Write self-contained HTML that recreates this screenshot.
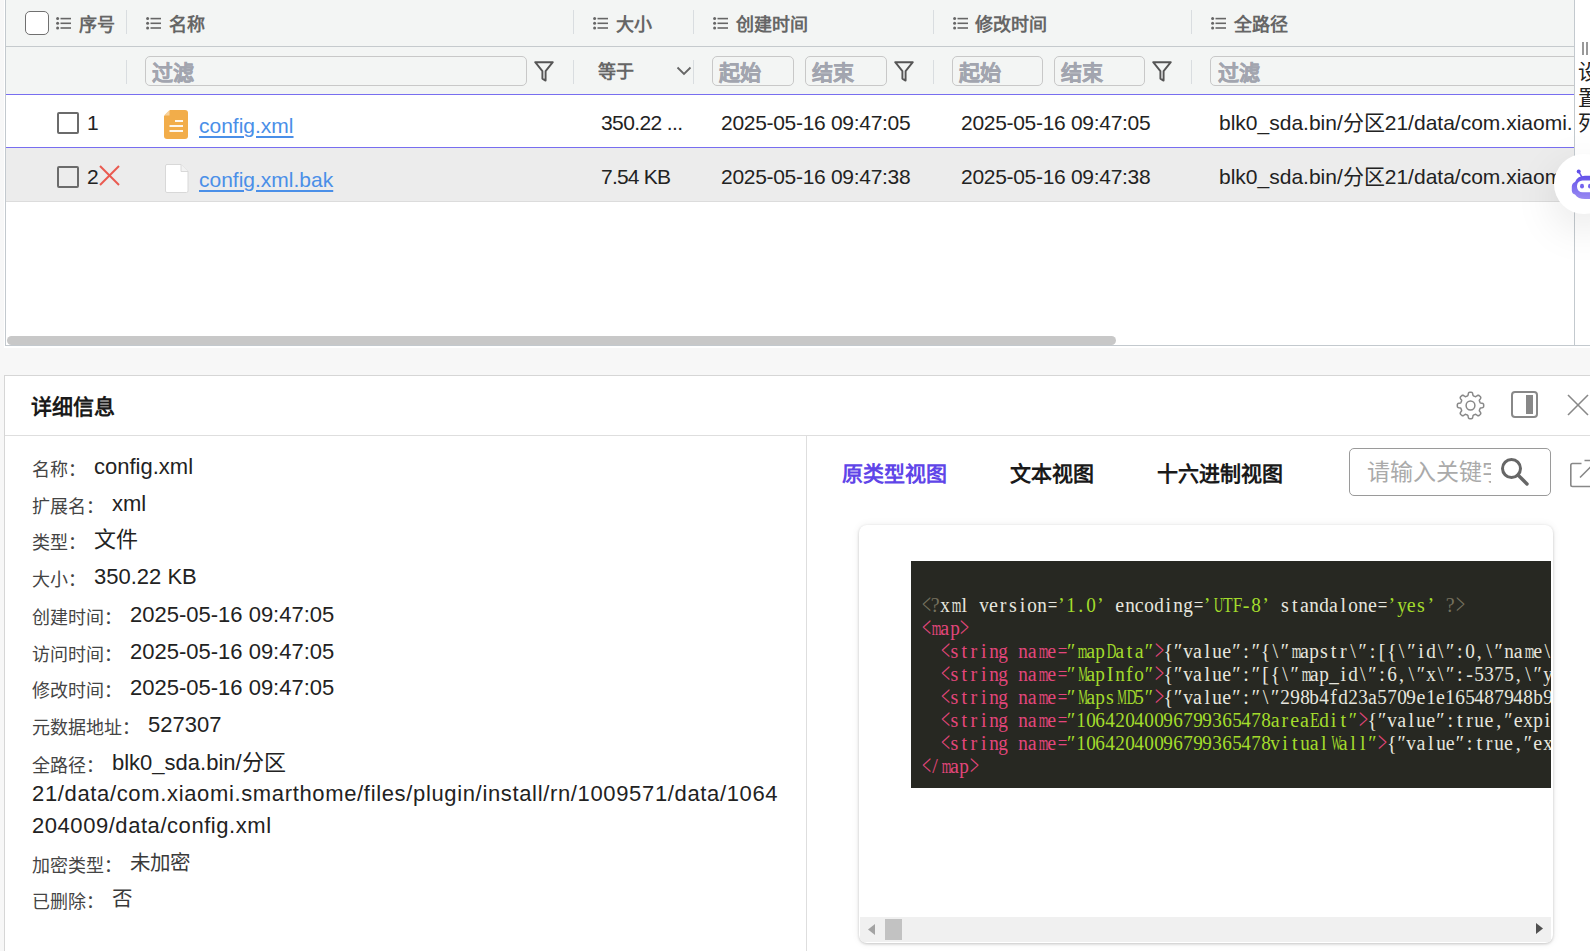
<!DOCTYPE html>
<html lang="zh-CN">
<head>
<meta charset="utf-8">
<style>
*{box-sizing:border-box;margin:0;padding:0}
html,body{width:1590px;height:951px;overflow:hidden;background:#f7f7f7;font-family:"Liberation Sans",sans-serif;color:#222}
.a{position:absolute}
#tblbg{left:5px;top:0;width:1570px;height:346px;background:#fff;border-left:1px solid #c3c9ce;border-right:1px solid #c3c9ce;border-bottom:1px solid #c3c9ce}
#tclip{left:0;top:0;width:1574px;height:345px;overflow:hidden}
.sep{width:1px;background:#d9dde0}
.ht{top:14px;font-size:18px;font-weight:bold;color:#666;line-height:22px;white-space:nowrap}
.inp{top:56px;height:30px;border:1px solid #c8c8c8;border-radius:5px;background:#f3f5f4}
.ph{top:61px;font-size:21px;font-weight:bold;color:#a2a5af;-webkit-text-stroke:0.4px #a2a5af;line-height:24px;white-space:nowrap}
.pline{width:1568px;height:1px;background:#786ef0}
.cb{border:2px solid #6b6b6b;background:#fff}
.cell{font-size:21px;line-height:24px;color:#222;white-space:nowrap;letter-spacing:-0.3px}
.lnk{font-size:21px;line-height:24px;color:#4a8fe8;text-decoration:underline;text-decoration-thickness:2px;text-underline-offset:3px;white-space:nowrap}
#det{left:4px;top:375px;width:1600px;height:600px;background:#fff;border-left:1px solid #d6d6d6;border-top:1px solid #d6d6d6}
.lab{left:32px;font-size:18px;color:#444;line-height:24px;white-space:nowrap}
.val{font-size:22px;color:#222;margin-left:8px}
.tab{top:461px;font-size:21px;font-weight:bold;line-height:26px;white-space:nowrap}
#card{position:absolute;left:859px;top:525px;width:694px;height:418px;background:#fff;border-radius:8px;box-shadow:0 1px 3px rgba(0,0,0,.2),0 0 8px rgba(0,0,0,.07);overflow:hidden}
#code{position:absolute;left:52px;top:36px;width:640px;height:227px;background:#272822;overflow:hidden}
#code pre{position:absolute;left:11px;top:12px;font-family:"Liberation Mono",monospace;font-size:17.4px;letter-spacing:-0.71px;line-height:23px;color:#e6e6df;white-space:pre}
.t{color:#e3467b}.s{color:#a3dc2c}.g{color:#75715e}
.cj{font-size:20.5px;color:#3a3a3a}
#cbox{left:9.5px;top:33px;width:700px;height:190px}
.cl{position:absolute;left:0;height:23px;white-space:nowrap;font-family:"Liberation Serif",serif;font-size:20px;line-height:23px;color:#e6e6df}
.cl i{font-style:normal;display:inline-block;width:9.73px;text-align:center;overflow:visible}
.lab{margin-top:1px}
.lab .val{position:relative;top:-2px}

</style>
</head>
<body>
<div class="a" style="left:4px;top:0;width:1586px;height:348px;background:#fff"></div>
<div class="a" id="tblbg"></div>
<div class="a" id="tclip">
<div class="a" style="left:6px;top:0;width:1568px;height:94px;background:#f3f5f4"></div>
<div class="a" style="left:6px;top:46px;width:1568px;height:1px;background:#c5cacd"></div>
<div class="a cb" style="left:25px;top:11px;width:24px;height:24px;border-radius:5px;border-width:1.6px;border-color:#707070"></div>
<svg class="a" style="left:56px;top:17px" width="16" height="13" viewBox="0 0 16 13"><g fill="#666"><circle cx="1.6" cy="1.6" r="1.5"/><circle cx="1.6" cy="6.3" r="1.5"/><circle cx="1.6" cy="11" r="1.5"/></g><g stroke="#666" stroke-width="1.6"><line x1="4.5" y1="1.6" x2="15" y2="1.6"/><line x1="4.5" y1="6.3" x2="15" y2="6.3"/><line x1="4.5" y1="11" x2="15" y2="11"/></g></svg>
<div class="a ht" style="left:79px">序号</div>
<div class="a sep" style="left:126px;top:10px;height:24px"></div>
<div class="a sep" style="left:126px;top:60px;height:24px"></div>
<svg class="a" style="left:146px;top:17px" width="16" height="13" viewBox="0 0 16 13"><g fill="#666"><circle cx="1.6" cy="1.6" r="1.5"/><circle cx="1.6" cy="6.3" r="1.5"/><circle cx="1.6" cy="11" r="1.5"/></g><g stroke="#666" stroke-width="1.6"><line x1="4.5" y1="1.6" x2="15" y2="1.6"/><line x1="4.5" y1="6.3" x2="15" y2="6.3"/><line x1="4.5" y1="11" x2="15" y2="11"/></g></svg>
<div class="a ht" style="left:169px">名称</div>
<div class="a sep" style="left:573px;top:10px;height:24px"></div>
<div class="a sep" style="left:573px;top:60px;height:24px"></div>
<svg class="a" style="left:593px;top:17px" width="16" height="13" viewBox="0 0 16 13"><g fill="#666"><circle cx="1.6" cy="1.6" r="1.5"/><circle cx="1.6" cy="6.3" r="1.5"/><circle cx="1.6" cy="11" r="1.5"/></g><g stroke="#666" stroke-width="1.6"><line x1="4.5" y1="1.6" x2="15" y2="1.6"/><line x1="4.5" y1="6.3" x2="15" y2="6.3"/><line x1="4.5" y1="11" x2="15" y2="11"/></g></svg>
<div class="a ht" style="left:616px">大小</div>
<div class="a sep" style="left:693px;top:10px;height:24px"></div>
<div class="a sep" style="left:693px;top:60px;height:24px"></div>
<svg class="a" style="left:713px;top:17px" width="16" height="13" viewBox="0 0 16 13"><g fill="#666"><circle cx="1.6" cy="1.6" r="1.5"/><circle cx="1.6" cy="6.3" r="1.5"/><circle cx="1.6" cy="11" r="1.5"/></g><g stroke="#666" stroke-width="1.6"><line x1="4.5" y1="1.6" x2="15" y2="1.6"/><line x1="4.5" y1="6.3" x2="15" y2="6.3"/><line x1="4.5" y1="11" x2="15" y2="11"/></g></svg>
<div class="a ht" style="left:736px">创建时间</div>
<div class="a sep" style="left:933px;top:10px;height:24px"></div>
<div class="a sep" style="left:933px;top:60px;height:24px"></div>
<svg class="a" style="left:953px;top:17px" width="16" height="13" viewBox="0 0 16 13"><g fill="#666"><circle cx="1.6" cy="1.6" r="1.5"/><circle cx="1.6" cy="6.3" r="1.5"/><circle cx="1.6" cy="11" r="1.5"/></g><g stroke="#666" stroke-width="1.6"><line x1="4.5" y1="1.6" x2="15" y2="1.6"/><line x1="4.5" y1="6.3" x2="15" y2="6.3"/><line x1="4.5" y1="11" x2="15" y2="11"/></g></svg>
<div class="a ht" style="left:975px">修改时间</div>
<div class="a sep" style="left:1191px;top:10px;height:24px"></div>
<div class="a sep" style="left:1191px;top:60px;height:24px"></div>
<svg class="a" style="left:1211px;top:17px" width="16" height="13" viewBox="0 0 16 13"><g fill="#666"><circle cx="1.6" cy="1.6" r="1.5"/><circle cx="1.6" cy="6.3" r="1.5"/><circle cx="1.6" cy="11" r="1.5"/></g><g stroke="#666" stroke-width="1.6"><line x1="4.5" y1="1.6" x2="15" y2="1.6"/><line x1="4.5" y1="6.3" x2="15" y2="6.3"/><line x1="4.5" y1="11" x2="15" y2="11"/></g></svg>
<div class="a ht" style="left:1234px">全路径</div>
<div class="a inp" style="left:145px;width:382px"></div>
<div class="a ph" style="left:152px">过滤</div>
<svg class="a" style="left:534px;top:61px" width="20" height="21" viewBox="0 0 20 21"><path d="M1.2 1.2 H18.8 L11.6 10.2 V19.6 L8.4 17.6 V10.2 Z" fill="none" stroke="#555" stroke-width="1.9" stroke-linejoin="round"/></svg>
<div class="a" style="left:598px;top:60px;font-size:18px;font-weight:bold;color:#666;line-height:24px">等于</div>
<svg class="a" style="left:676px;top:66px" width="16" height="10" viewBox="0 0 16 10"><path d="M1.5 1.5 L8 8 L14.5 1.5" fill="none" stroke="#666" stroke-width="1.8"/></svg>
<div class="a inp" style="left:712px;width:82px"></div>
<div class="a ph" style="left:719px">起始</div>
<div class="a inp" style="left:805px;width:82px"></div>
<div class="a ph" style="left:812px">结束</div>
<svg class="a" style="left:894px;top:61px" width="20" height="21" viewBox="0 0 20 21"><path d="M1.2 1.2 H18.8 L11.6 10.2 V19.6 L8.4 17.6 V10.2 Z" fill="none" stroke="#555" stroke-width="1.9" stroke-linejoin="round"/></svg>
<div class="a inp" style="left:952px;width:91px"></div>
<div class="a ph" style="left:959px">起始</div>
<div class="a inp" style="left:1054px;width:91px"></div>
<div class="a ph" style="left:1061px">结束</div>
<svg class="a" style="left:1152px;top:61px" width="20" height="21" viewBox="0 0 20 21"><path d="M1.2 1.2 H18.8 L11.6 10.2 V19.6 L8.4 17.6 V10.2 Z" fill="none" stroke="#555" stroke-width="1.9" stroke-linejoin="round"/></svg>
<div class="a inp" style="left:1210px;width:390px"></div>
<div class="a ph" style="left:1218px">过滤</div>
<div class="a pline" style="left:6px;top:94px"></div>
<div class="a cb" style="left:57px;top:112px;width:22px;height:22px;border-radius:2px"></div>
<div class="a cell" style="left:87px;top:111px">1</div>
<svg class="a" style="left:164px;top:110px" width="24" height="29" viewBox="0 0 24 29"><path d="M6 0 H21 Q24 0 24 3 V26 Q24 29 21 29 H3 Q0 29 0 26 V6 Z" fill="#f2ad4a"/><path d="M0 5.5 L5.5 0 V5.5 Z" fill="#f7d29b"/><g stroke="#fff" stroke-width="1.8"><line x1="11" y1="11" x2="19" y2="11"/><line x1="5.5" y1="16" x2="19" y2="16"/><line x1="5.5" y1="21" x2="19" y2="21"/></g></svg>
<div class="a lnk" style="left:199px;top:114px">config.xml</div>
<div class="a cell" style="left:601px;top:111px;letter-spacing:-0.6px">350.22 ...</div>
<div class="a cell" style="left:721px;top:111px">2025-05-16 09:47:05</div>
<div class="a cell" style="left:961px;top:111px">2025-05-16 09:47:05</div>
<div class="a cell" style="left:1219px;top:111px;letter-spacing:0px">blk0_sda.bin/分区21/data/com.xiaomi.</div>
<div class="a pline" style="left:6px;top:147px"></div>
<div class="a" style="left:6px;top:148px;width:1568px;height:53px;background:#ececec"></div>
<div class="a" style="left:6px;top:201px;width:1568px;height:1px;background:#dcdcdc"></div>
<div class="a cb" style="left:57px;top:166px;width:22px;height:22px;border-radius:2px;background:transparent"></div>
<div class="a cell" style="left:87px;top:165px">2</div>
<svg class="a" style="left:99px;top:165px" width="21" height="21" viewBox="0 0 21 21"><g stroke="#ea5a50" stroke-width="2"><line x1="1" y1="1" x2="20" y2="20"/><line x1="20" y1="1" x2="1" y2="20"/></g></svg>
<svg class="a" style="left:165px;top:164px" width="24" height="29" viewBox="0 0 24 29"><path d="M1.5 0.5 H16 L23 7.5 V27 Q23 28.5 21.5 28.5 H2 Q0.5 28.5 0.5 27 V2 Q0.5 0.5 2 0.5 Z" fill="#fff" stroke="#d8d8d8" stroke-width="1"/><path d="M16 0.5 V7.5 H23" fill="#f2f2f2" stroke="#d8d8d8" stroke-width="1"/></svg>
<div class="a lnk" style="left:199px;top:168px">config.xml.bak</div>
<div class="a cell" style="left:601px;top:165px;letter-spacing:-0.8px">7.54 KB</div>
<div class="a cell" style="left:721px;top:165px">2025-05-16 09:47:38</div>
<div class="a cell" style="left:961px;top:165px">2025-05-16 09:47:38</div>
<div class="a cell" style="left:1219px;top:165px;letter-spacing:0px">blk0_sda.bin/分区21/data/com.xiaomi.</div>
<div class="a" style="left:7px;top:336px;width:1109px;height:9px;background:#c8c8c8;border-radius:5px"></div>
</div>
<div class="a" style="left:1575px;top:345px;width:15px;height:1px;background:#c3c9ce"></div>
<div class="a" style="left:1582px;top:42px;width:2px;height:13px;background:#999"></div>
<div class="a" style="left:1586px;top:42px;width:2px;height:13px;background:#999"></div>
<div class="a" style="left:1578px;top:59px;width:24px;font-size:21px;line-height:25.5px;color:#222">设置列</div>
<div class="a" style="left:1554px;top:154px;width:60px;height:60px;border-radius:50%;background:#fff;box-shadow:0 14px 44px rgba(0,0,0,.10)"></div>
<svg class="a" style="left:1568px;top:166px" width="22" height="36" viewBox="0 0 22 36"><defs><linearGradient id="rg" x1="0" y1="0" x2="0" y2="1"><stop offset="0" stop-color="#6352ea"/><stop offset="1" stop-color="#9a8bf2"/></linearGradient></defs><circle cx="10.7" cy="5.6" r="2" fill="#5f4fe9"/><path d="M10.7 5.6 L14 11.2" stroke="#6352ea" stroke-width="1.5"/><path d="M7 16 Q4 17 3.8 20.5 V24.5 Q4 28 7 28.5 Q10 33 17 33 H30 V9.8 H17 Q9.5 9.8 7 16 Z" fill="url(#rg)"/><rect x="9" y="14.5" width="24" height="11.8" rx="5.5" fill="#fff"/><ellipse cx="14" cy="20.2" rx="2" ry="2.4" fill="#7565ee"/><ellipse cx="22" cy="20.2" rx="2" ry="2.4" fill="#7565ee"/></svg>
<div class="a" id="det"></div>
<div class="a" style="left:5px;top:435px;width:1585px;height:1px;background:#dedede"></div>
<div class="a" style="left:31px;top:394px;font-size:21px;font-weight:bold;color:#1a1a1a;line-height:26px">详细信息</div>
<svg class="a" style="left:1456px;top:391px" width="29" height="29" viewBox="0 0 29 29"><path d="M14.50 1.30 L15.02 1.32 L15.53 1.37 L16.03 1.53 L16.48 2.00 L16.76 3.12 L16.96 4.24 L17.25 4.74 L17.60 4.96 L17.96 5.11 L18.33 5.26 L18.69 5.41 L19.06 5.56 L19.46 5.65 L20.01 5.51 L20.94 4.85 L21.94 4.26 L22.58 4.24 L23.05 4.49 L23.46 4.81 L23.83 5.17 L24.19 5.54 L24.51 5.95 L24.76 6.42 L24.74 7.06 L24.15 8.06 L23.49 8.99 L23.35 9.54 L23.44 9.94 L23.59 10.31 L23.74 10.67 L23.89 11.04 L24.04 11.40 L24.26 11.75 L24.76 12.04 L25.88 12.24 L27.00 12.52 L27.47 12.97 L27.63 13.47 L27.68 13.98 L27.70 14.50 L27.68 15.02 L27.63 15.53 L27.47 16.03 L27.00 16.48 L25.88 16.76 L24.76 16.96 L24.26 17.25 L24.04 17.60 L23.89 17.96 L23.74 18.33 L23.59 18.69 L23.44 19.06 L23.35 19.46 L23.49 20.01 L24.15 20.94 L24.74 21.94 L24.76 22.58 L24.51 23.05 L24.19 23.46 L23.83 23.83 L23.46 24.19 L23.05 24.51 L22.58 24.76 L21.94 24.74 L20.94 24.15 L20.01 23.49 L19.46 23.35 L19.06 23.44 L18.69 23.59 L18.33 23.74 L17.96 23.89 L17.60 24.04 L17.25 24.26 L16.96 24.76 L16.76 25.88 L16.48 27.00 L16.03 27.47 L15.53 27.63 L15.02 27.68 L14.50 27.70 L13.98 27.68 L13.47 27.63 L12.97 27.47 L12.52 27.00 L12.24 25.88 L12.04 24.76 L11.75 24.26 L11.40 24.04 L11.04 23.89 L10.67 23.74 L10.31 23.59 L9.94 23.44 L9.54 23.35 L8.99 23.49 L8.06 24.15 L7.06 24.74 L6.42 24.76 L5.95 24.51 L5.54 24.19 L5.17 23.83 L4.81 23.46 L4.49 23.05 L4.24 22.58 L4.26 21.94 L4.85 20.94 L5.51 20.01 L5.65 19.46 L5.56 19.06 L5.41 18.69 L5.26 18.33 L5.11 17.96 L4.96 17.60 L4.74 17.25 L4.24 16.96 L3.12 16.76 L2.00 16.48 L1.53 16.03 L1.37 15.53 L1.32 15.02 L1.30 14.50 L1.32 13.98 L1.37 13.47 L1.53 12.97 L2.00 12.52 L3.12 12.24 L4.24 12.04 L4.74 11.75 L4.96 11.40 L5.11 11.04 L5.26 10.67 L5.41 10.31 L5.56 9.94 L5.65 9.54 L5.51 8.99 L4.85 8.06 L4.26 7.06 L4.24 6.42 L4.49 5.95 L4.81 5.54 L5.17 5.17 L5.54 4.81 L5.95 4.49 L6.42 4.24 L7.06 4.26 L8.06 4.85 L8.99 5.51 L9.54 5.65 L9.94 5.56 L10.31 5.41 L10.67 5.26 L11.04 5.11 L11.40 4.96 L11.75 4.74 L12.04 4.24 L12.24 3.12 L12.52 2.00 L12.97 1.53 L13.47 1.37 L13.98 1.32 Z" fill="none" stroke="#888" stroke-width="1.5" stroke-linejoin="round"/><circle cx="14.5" cy="14.5" r="4.4" fill="none" stroke="#888" stroke-width="1.5"/></svg>
<div class="a" style="left:1511px;top:391px;width:27px;height:27px;border:2px solid #888;border-radius:4px"></div>
<div class="a" style="left:1526px;top:395px;width:7px;height:19px;background:#888"></div>
<svg class="a" style="left:1567px;top:394px" width="23" height="23" viewBox="0 0 23 23"><g stroke="#888" stroke-width="1.6"><line x1="1" y1="1" x2="21" y2="21"/><line x1="21" y1="1" x2="1" y2="21"/></g></svg>
<div class="a" style="left:806px;top:436px;width:1px;height:515px;background:#dedede"></div>
<div class="a lab" style="top:456px">名称：<span class="val">config.xml</span></div>
<div class="a lab" style="top:493px">扩展名：<span class="val">xml</span></div>
<div class="a lab" style="top:529px">类型：<span class="val">文件</span></div>
<div class="a lab" style="top:566px">大小：<span class="val">350.22 KB</span></div>
<div class="a lab" style="top:604px">创建时间：<span class="val">2025-05-16 09:47:05</span></div>
<div class="a lab" style="top:641px">访问时间：<span class="val">2025-05-16 09:47:05</span></div>
<div class="a lab" style="top:677px">修改时间：<span class="val">2025-05-16 09:47:05</span></div>
<div class="a lab" style="top:714px">元数据地址：<span class="val">527307</span></div>
<div class="a lab" style="top:752px">全路径：<span class="val">blk0_sda.bin/分区</span></div>
<div class="a val" style="left:32px;top:782px;margin:0;line-height:24px;white-space:nowrap;letter-spacing:0.65px">21/data/com.xiaomi.smarthome/files/plugin/install/rn/1009571/data/1064</div>
<div class="a val" style="left:32px;top:814px;margin:0;line-height:24px;white-space:nowrap;letter-spacing:0.55px">204009/data/config.xml</div>
<div class="a lab" style="top:852px">加密类型：<span class="val cj">未加密</span></div>
<div class="a lab" style="top:888px">已删除：<span class="val cj">否</span></div>
<div class="a tab" style="left:842px;color:#5f45e8">原类型视图</div>
<div class="a tab" style="left:1010px;color:#1a1a1a">文本视图</div>
<div class="a tab" style="left:1157px;color:#1a1a1a">十六进制视图</div>
<div class="a" style="left:1349px;top:448px;width:202px;height:48px;border:1px solid #9a9a9a;border-radius:5px;background:#fff;overflow:hidden"><div class="a" style="left:17px;top:10px;width:124px;overflow:hidden;white-space:nowrap;font-size:23px;line-height:27px;color:#aaa">请输入关键字</div></div>
<svg class="a" style="left:1500px;top:457px" width="30" height="30" viewBox="0 0 30 30"><circle cx="11.5" cy="11.5" r="9" fill="none" stroke="#666" stroke-width="3"/><line x1="18" y1="18" x2="27" y2="27" stroke="#666" stroke-width="3.4" stroke-linecap="round"/></svg>
<svg class="a" style="left:1569px;top:459px" width="24" height="29" viewBox="0 0 24 29"><path d="M12.5 4.5 H3.5 Q1.8 4.5 1.8 6.2 V25.8 Q1.8 27.5 3.5 27.5 H24" fill="none" stroke="#888" stroke-width="1.6"/><path d="M11 18.5 L22 7.5 M15.5 1.5 H24" fill="none" stroke="#888" stroke-width="1.6"/></svg>
<div id="card"><div id="code"><div class="a" id="cbox"><div class="cl" style="top:0px"><i class=g style="transform:translateY(-0.5px) scale(0.8,1.42)">&lt;</i><i class=g>?</i><i style="transform:scaleX(0.960)">x</i><i style="transform:scaleX(0.617)">m</i><i>l</i><i> </i><i style="transform:scaleX(0.960)">v</i><i>e</i><i>r</i><i>s</i><i>i</i><i style="transform:scaleX(0.960)">o</i><i style="transform:scaleX(0.960)">n</i><i style="transform:scaleX(0.851)">=</i><i class=s>’</i><i class=s style="transform:scaleX(0.960)">1</i><i class=s>.</i><i class=s style="transform:scaleX(0.960)">0</i><i class=s>’</i><i> </i><i>e</i><i style="transform:scaleX(0.960)">n</i><i>c</i><i style="transform:scaleX(0.960)">o</i><i style="transform:scaleX(0.960)">d</i><i>i</i><i style="transform:scaleX(0.960)">n</i><i style="transform:scaleX(0.960)">g</i><i style="transform:scaleX(0.851)">=</i><i class=s>’</i><i class=s style="transform:scaleX(0.665)">U</i><i class=s style="transform:scaleX(0.786)">T</i><i class=s style="transform:scaleX(0.863)">F</i><i class=s>-</i><i class=s style="transform:scaleX(0.960)">8</i><i class=s>’</i><i> </i><i>s</i><i>t</i><i>a</i><i style="transform:scaleX(0.960)">n</i><i style="transform:scaleX(0.960)">d</i><i>a</i><i>l</i><i style="transform:scaleX(0.960)">o</i><i style="transform:scaleX(0.960)">n</i><i>e</i><i style="transform:scaleX(0.851)">=</i><i class=s>’</i><i class=s style="transform:scaleX(0.960)">y</i><i class=s>e</i><i class=s>s</i><i class=s>’</i><i> </i><i class=g>?</i><i class=g style="transform:translateY(-0.5px) scale(0.8,1.42)">&gt;</i></div><div class="cl" style="top:23px"><i class=t style="transform:translateY(-0.5px) scale(0.8,1.42)">&lt;</i><i class=t style="transform:scaleX(0.617)">m</i><i class=t>a</i><i class=t style="transform:scaleX(0.960)">p</i><i class=t style="transform:translateY(-0.5px) scale(0.8,1.42)">&gt;</i></div><div class="cl" style="top:46px"><i> </i><i> </i><i class=t style="transform:translateY(-0.5px) scale(0.8,1.42)">&lt;</i><i class=t>s</i><i class=t>t</i><i class=t>r</i><i class=t>i</i><i class=t style="transform:scaleX(0.960)">n</i><i class=t style="transform:scaleX(0.960)">g</i><i> </i><i class=t style="transform:scaleX(0.960)">n</i><i class=t>a</i><i class=t style="transform:scaleX(0.617)">m</i><i class=t>e</i><i class=t style="transform:scaleX(0.851)">=</i><i class=s>″</i><i class=s style="transform:scaleX(0.617)">m</i><i class=s>a</i><i class=s style="transform:scaleX(0.960)">p</i><i class=s style="transform:scaleX(0.665)">D</i><i class=s>a</i><i class=s>t</i><i class=s>a</i><i class=s>″</i><i class=t style="transform:translateY(-0.5px) scale(0.8,1.42)">&gt;</i><i>{</i><i>″</i><i style="transform:scaleX(0.960)">v</i><i>a</i><i>l</i><i style="transform:scaleX(0.960)">u</i><i>e</i><i>″</i><i>:</i><i>″</i><i>{</i><i>\</i><i>″</i><i style="transform:scaleX(0.617)">m</i><i>a</i><i style="transform:scaleX(0.960)">p</i><i>s</i><i>t</i><i>r</i><i>\</i><i>″</i><i>:</i><i>[</i><i>{</i><i>\</i><i>″</i><i>i</i><i style="transform:scaleX(0.960)">d</i><i>\</i><i>″</i><i>:</i><i style="transform:scaleX(0.960)">0</i><i>,</i><i>\</i><i>″</i><i style="transform:scaleX(0.960)">n</i><i>a</i><i style="transform:scaleX(0.617)">m</i><i>e</i><i>\</i><i>″</i><i>:</i></div><div class="cl" style="top:69px"><i> </i><i> </i><i class=t style="transform:translateY(-0.5px) scale(0.8,1.42)">&lt;</i><i class=t>s</i><i class=t>t</i><i class=t>r</i><i class=t>i</i><i class=t style="transform:scaleX(0.960)">n</i><i class=t style="transform:scaleX(0.960)">g</i><i> </i><i class=t style="transform:scaleX(0.960)">n</i><i class=t>a</i><i class=t style="transform:scaleX(0.617)">m</i><i class=t>e</i><i class=t style="transform:scaleX(0.851)">=</i><i class=s>″</i><i class=s style="transform:scaleX(0.540)">M</i><i class=s>a</i><i class=s style="transform:scaleX(0.960)">p</i><i class=s>I</i><i class=s style="transform:scaleX(0.960)">n</i><i class=s>f</i><i class=s style="transform:scaleX(0.960)">o</i><i class=s>″</i><i class=t style="transform:translateY(-0.5px) scale(0.8,1.42)">&gt;</i><i>{</i><i>″</i><i style="transform:scaleX(0.960)">v</i><i>a</i><i>l</i><i style="transform:scaleX(0.960)">u</i><i>e</i><i>″</i><i>:</i><i>″</i><i>[</i><i>{</i><i>\</i><i>″</i><i style="transform:scaleX(0.617)">m</i><i>a</i><i style="transform:scaleX(0.960)">p</i><i style="transform:scaleX(0.960)">_</i><i>i</i><i style="transform:scaleX(0.960)">d</i><i>\</i><i>″</i><i>:</i><i style="transform:scaleX(0.960)">6</i><i>,</i><i>\</i><i>″</i><i style="transform:scaleX(0.960)">x</i><i>\</i><i>″</i><i>:</i><i>-</i><i style="transform:scaleX(0.960)">5</i><i style="transform:scaleX(0.960)">3</i><i style="transform:scaleX(0.960)">7</i><i style="transform:scaleX(0.960)">5</i><i>,</i><i>\</i><i>″</i><i style="transform:scaleX(0.960)">y</i></div><div class="cl" style="top:92px"><i> </i><i> </i><i class=t style="transform:translateY(-0.5px) scale(0.8,1.42)">&lt;</i><i class=t>s</i><i class=t>t</i><i class=t>r</i><i class=t>i</i><i class=t style="transform:scaleX(0.960)">n</i><i class=t style="transform:scaleX(0.960)">g</i><i> </i><i class=t style="transform:scaleX(0.960)">n</i><i class=t>a</i><i class=t style="transform:scaleX(0.617)">m</i><i class=t>e</i><i class=t style="transform:scaleX(0.851)">=</i><i class=s>″</i><i class=s style="transform:scaleX(0.540)">M</i><i class=s>a</i><i class=s style="transform:scaleX(0.960)">p</i><i class=s>s</i><i class=s style="transform:scaleX(0.540)">M</i><i class=s style="transform:scaleX(0.665)">D</i><i class=s style="transform:scaleX(0.960)">5</i><i class=s>″</i><i class=t style="transform:translateY(-0.5px) scale(0.8,1.42)">&gt;</i><i>{</i><i>″</i><i style="transform:scaleX(0.960)">v</i><i>a</i><i>l</i><i style="transform:scaleX(0.960)">u</i><i>e</i><i>″</i><i>:</i><i>″</i><i>\</i><i>″</i><i style="transform:scaleX(0.960)">2</i><i style="transform:scaleX(0.960)">9</i><i style="transform:scaleX(0.960)">8</i><i style="transform:scaleX(0.960)">b</i><i style="transform:scaleX(0.960)">4</i><i>f</i><i style="transform:scaleX(0.960)">d</i><i style="transform:scaleX(0.960)">2</i><i style="transform:scaleX(0.960)">3</i><i>a</i><i style="transform:scaleX(0.960)">5</i><i style="transform:scaleX(0.960)">7</i><i style="transform:scaleX(0.960)">0</i><i style="transform:scaleX(0.960)">9</i><i>e</i><i style="transform:scaleX(0.960)">1</i><i>e</i><i style="transform:scaleX(0.960)">1</i><i style="transform:scaleX(0.960)">6</i><i style="transform:scaleX(0.960)">5</i><i style="transform:scaleX(0.960)">4</i><i style="transform:scaleX(0.960)">8</i><i style="transform:scaleX(0.960)">7</i><i style="transform:scaleX(0.960)">9</i><i style="transform:scaleX(0.960)">4</i><i style="transform:scaleX(0.960)">8</i><i style="transform:scaleX(0.960)">b</i><i style="transform:scaleX(0.960)">9</i></div><div class="cl" style="top:115px"><i> </i><i> </i><i class=t style="transform:translateY(-0.5px) scale(0.8,1.42)">&lt;</i><i class=t>s</i><i class=t>t</i><i class=t>r</i><i class=t>i</i><i class=t style="transform:scaleX(0.960)">n</i><i class=t style="transform:scaleX(0.960)">g</i><i> </i><i class=t style="transform:scaleX(0.960)">n</i><i class=t>a</i><i class=t style="transform:scaleX(0.617)">m</i><i class=t>e</i><i class=t style="transform:scaleX(0.851)">=</i><i class=s>″</i><i class=s style="transform:scaleX(0.960)">1</i><i class=s style="transform:scaleX(0.960)">0</i><i class=s style="transform:scaleX(0.960)">6</i><i class=s style="transform:scaleX(0.960)">4</i><i class=s style="transform:scaleX(0.960)">2</i><i class=s style="transform:scaleX(0.960)">0</i><i class=s style="transform:scaleX(0.960)">4</i><i class=s style="transform:scaleX(0.960)">0</i><i class=s style="transform:scaleX(0.960)">0</i><i class=s style="transform:scaleX(0.960)">9</i><i class=s style="transform:scaleX(0.960)">6</i><i class=s style="transform:scaleX(0.960)">7</i><i class=s style="transform:scaleX(0.960)">9</i><i class=s style="transform:scaleX(0.960)">9</i><i class=s style="transform:scaleX(0.960)">3</i><i class=s style="transform:scaleX(0.960)">6</i><i class=s style="transform:scaleX(0.960)">5</i><i class=s style="transform:scaleX(0.960)">4</i><i class=s style="transform:scaleX(0.960)">7</i><i class=s style="transform:scaleX(0.960)">8</i><i class=s>a</i><i class=s>r</i><i class=s>e</i><i class=s>a</i><i class=s style="transform:scaleX(0.786)">E</i><i class=s style="transform:scaleX(0.960)">d</i><i class=s>i</i><i class=s>t</i><i class=s>″</i><i class=t style="transform:translateY(-0.5px) scale(0.8,1.42)">&gt;</i><i>{</i><i>″</i><i style="transform:scaleX(0.960)">v</i><i>a</i><i>l</i><i style="transform:scaleX(0.960)">u</i><i>e</i><i>″</i><i>:</i><i>t</i><i>r</i><i style="transform:scaleX(0.960)">u</i><i>e</i><i>,</i><i>″</i><i>e</i><i style="transform:scaleX(0.960)">x</i><i style="transform:scaleX(0.960)">p</i><i>i</i><i>r</i><i>e</i></div><div class="cl" style="top:138px"><i> </i><i> </i><i class=t style="transform:translateY(-0.5px) scale(0.8,1.42)">&lt;</i><i class=t>s</i><i class=t>t</i><i class=t>r</i><i class=t>i</i><i class=t style="transform:scaleX(0.960)">n</i><i class=t style="transform:scaleX(0.960)">g</i><i> </i><i class=t style="transform:scaleX(0.960)">n</i><i class=t>a</i><i class=t style="transform:scaleX(0.617)">m</i><i class=t>e</i><i class=t style="transform:scaleX(0.851)">=</i><i class=s>″</i><i class=s style="transform:scaleX(0.960)">1</i><i class=s style="transform:scaleX(0.960)">0</i><i class=s style="transform:scaleX(0.960)">6</i><i class=s style="transform:scaleX(0.960)">4</i><i class=s style="transform:scaleX(0.960)">2</i><i class=s style="transform:scaleX(0.960)">0</i><i class=s style="transform:scaleX(0.960)">4</i><i class=s style="transform:scaleX(0.960)">0</i><i class=s style="transform:scaleX(0.960)">0</i><i class=s style="transform:scaleX(0.960)">9</i><i class=s style="transform:scaleX(0.960)">6</i><i class=s style="transform:scaleX(0.960)">7</i><i class=s style="transform:scaleX(0.960)">9</i><i class=s style="transform:scaleX(0.960)">9</i><i class=s style="transform:scaleX(0.960)">3</i><i class=s style="transform:scaleX(0.960)">6</i><i class=s style="transform:scaleX(0.960)">5</i><i class=s style="transform:scaleX(0.960)">4</i><i class=s style="transform:scaleX(0.960)">7</i><i class=s style="transform:scaleX(0.960)">8</i><i class=s style="transform:scaleX(0.960)">v</i><i class=s>i</i><i class=s>t</i><i class=s style="transform:scaleX(0.960)">u</i><i class=s>a</i><i class=s>l</i><i class=s style="transform:scaleX(0.509)">W</i><i class=s>a</i><i class=s>l</i><i class=s>l</i><i class=s>″</i><i class=t style="transform:translateY(-0.5px) scale(0.8,1.42)">&gt;</i><i>{</i><i>″</i><i style="transform:scaleX(0.960)">v</i><i>a</i><i>l</i><i style="transform:scaleX(0.960)">u</i><i>e</i><i>″</i><i>:</i><i>t</i><i>r</i><i style="transform:scaleX(0.960)">u</i><i>e</i><i>,</i><i>″</i><i>e</i><i style="transform:scaleX(0.960)">x</i><i style="transform:scaleX(0.960)">p</i><i>i</i><i>r</i><i>e</i></div><div class="cl" style="top:161px"><i class=t style="transform:translateY(-0.5px) scale(0.8,1.42)">&lt;</i><i class=t>/</i><i class=t style="transform:scaleX(0.617)">m</i><i class=t>a</i><i class=t style="transform:scaleX(0.960)">p</i><i class=t style="transform:translateY(-0.5px) scale(0.8,1.42)">&gt;</i></div></div></div>
<div class="a" style="left:1px;top:392px;width:691px;height:25px;background:#f0f0f0"></div>
<svg class="a" style="left:9px;top:399px" width="8" height="12" viewBox="0 0 8 12"><path d="M7 0 V11 L0 5.5 Z" fill="#a3a3a3"/></svg>
<div class="a" style="left:26px;top:394px;width:17px;height:21px;background:#c2c2c2"></div>
<svg class="a" style="left:677px;top:398px" width="8" height="12" viewBox="0 0 8 12"><path d="M0 0 V11 L7 5.5 Z" fill="#505050"/></svg>
</div>
</body>
</html>
